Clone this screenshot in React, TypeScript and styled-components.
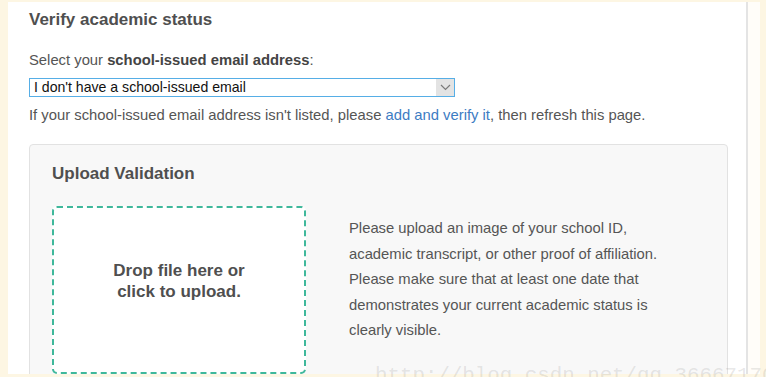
import React from "react";
import styled, { createGlobalStyle } from "styled-components";

const GlobalStyle = createGlobalStyle`
  html, body {
    margin: 0;
    padding: 0;
    background: #fdf6e3;
  }
  body {
    font-family: "Liberation Sans", Arial, sans-serif;
    overflow: hidden;
  }
`;

const Page = styled.div`
  position: relative;
  width: 766px;
  height: 377px;
  box-sizing: border-box;
  padding: 2px 4px 3px 8px;
  display: flex;
  background: #fdf6e3;
  overflow: hidden;
`;

const Sheet = styled.div`
  width: 740px;
  box-sizing: border-box;
  background: #ffffff;
  border-right: 2px solid #e4e4e4;
  padding: 8px 20px 0 21px;
  overflow: hidden;
  color: #555555;
`;

const SideStrip = styled.div`
  width: 12px;
  background: #fffdf9;
`;

const Heading = styled.h2`
  margin: 0;
  font-size: 17px;
  line-height: 20px;
  font-weight: bold;
  color: #4f4f4f;
`;

const Label = styled.div`
  margin-top: 22px;
  font-size: 14.8px;
  line-height: 17px;
  color: #555555;

  b {
    color: #444444;
  }
`;

const SelectFrame = styled.div`
  margin-top: 9px;
  width: 426px;
  height: 19px;
  box-sizing: border-box;
  border: 1px solid #56aee6;
  display: flex;
  background: #ffffff;
`;

const NativeSelect = styled.select`
  flex: 1;
  border: 0;
  outline: 0;
  appearance: none;
  background: transparent;
  padding: 0 4px;
  margin: 0;
  font-family: "Liberation Sans", Arial, sans-serif;
  font-size: 14.1px;
  line-height: 17px;
  color: #111111;
`;

const ArrowBox = styled.span`
  width: 18px;
  background: #e3e3e3;
  display: flex;
  align-items: center;
  justify-content: center;
`;

const HelpText = styled.p`
  margin: 10px 0 0;
  font-size: 14.8px;
  line-height: 17px;
  color: #555555;
`;

const TextLink = styled.a`
  color: #3d7cc3;
  text-decoration: none;
`;

const UploadPanel = styled.section`
  margin-top: 20px;
  width: 699px;
  height: 260px;
  box-sizing: border-box;
  background: #f8f8f8;
  border: 1px solid #e2e2e2;
  border-radius: 4px;
  padding: 19px 22px 0 22px;
`;

const PanelTitle = styled.h3`
  margin: 0;
  font-size: 17px;
  line-height: 20px;
  font-weight: bold;
  color: #4f4f4f;
`;

const UploadRow = styled.div`
  margin-top: 22px;
  display: flex;
  align-items: flex-start;
  gap: 43px;
`;

const DropZone = styled.div`
  width: 254px;
  height: 168px;
  box-sizing: border-box;
  border: 2px dashed #3fb89b;
  border-radius: 5px;
  background: #ffffff;
  display: flex;
  align-items: center;
  justify-content: center;
  padding-bottom: 19px;
  text-align: center;
  font-size: 17px;
  line-height: 21px;
  font-weight: bold;
  color: #4f4f4f;
  cursor: pointer;
`;

const Instructions = styled.p`
  margin: 10px 0 0;
  width: 322px;
  font-size: 14.8px;
  line-height: 25.5px;
  color: #555555;
`;

const Watermark = styled.div`
  position: absolute;
  left: 375px;
  top: 366px;
  font-family: "Liberation Mono", "Courier New", monospace;
  font-size: 20.8px;
  line-height: 1;
  color: rgba(120, 120, 120, 0.18);
  white-space: nowrap;
  pointer-events: none;
`;

function Chevron() {
  return (
    <svg width="11" height="7" viewBox="0 0 11 7">
      <path d="M1 1 L5.5 5.5 L10 1" fill="none" stroke="#7a7a7a" strokeWidth="1.2" />
    </svg>
  );
}

export default function App() {
  return (
    <>
      <GlobalStyle />
      <Page>
        <Sheet>
          <Heading>Verify academic status</Heading>
          <Label>
            Select your <b>school-issued email address</b>:
          </Label>
          <SelectFrame>
            <NativeSelect defaultValue="none">
              <option value="none">I don't have a school-issued email</option>
            </NativeSelect>
            <ArrowBox>
              <Chevron />
            </ArrowBox>
          </SelectFrame>
          <HelpText>
            If your school-issued email address isn't listed, please{" "}
            <TextLink href="#">add and verify it</TextLink>, then refresh this
            page.
          </HelpText>
          <UploadPanel>
            <PanelTitle>Upload Validation</PanelTitle>
            <UploadRow>
              <DropZone>
                Drop file here or
                <br />
                click to upload.
              </DropZone>
              <Instructions>
                Please upload an image of your school ID, academic transcript,
                or other proof of affiliation. Please make sure that at least
                one date that demonstrates your current academic status is
                clearly visible.
              </Instructions>
            </UploadRow>
          </UploadPanel>
        </Sheet>
        <SideStrip />
        <Watermark>http://blog.csdn.net/qq_36667170</Watermark>
      </Page>
    </>
  );
}
